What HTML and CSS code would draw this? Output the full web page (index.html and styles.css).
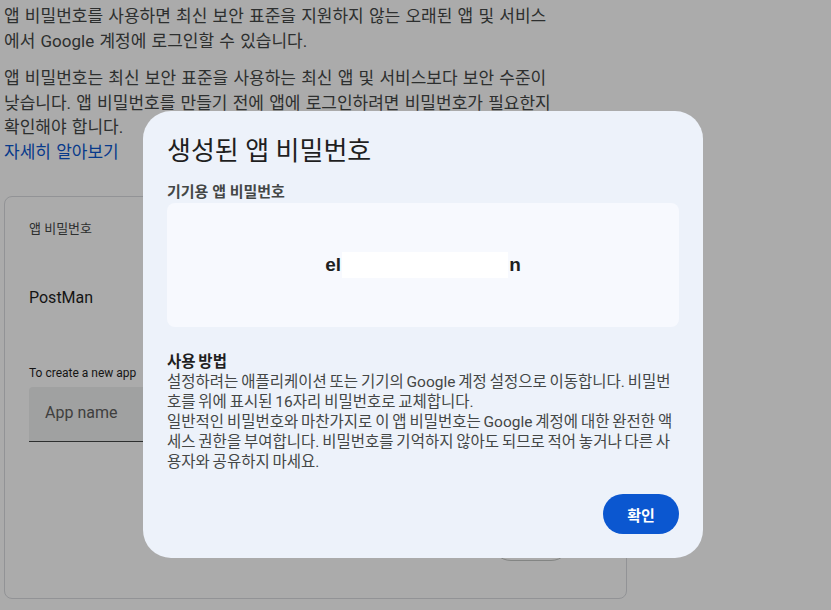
FILE: index.html
```html
<!DOCTYPE html>
<html lang="ko">

<head>
  <meta charset="utf-8">
  <meta name="viewport" content="width=device-width, initial-scale=1">
  <title>앱 비밀번호</title>
  <link rel="stylesheet" href="styles.css">
</head>

<body>
  <div class="page">
    <p class="intro">앱 비밀번호를 사용하면 최신 보안 표준을 지원하지 않는 오래된 앱 및 서비스에서 Google 계정에 로그인할 수 있습니다.</p>
    <p class="intro">앱 비밀번호는 최신 보안 표준을 사용하는 최신 앱 및 서비스보다 보안 수준이 낮습니다. 앱 비밀번호를 만들기 전에 앱에 로그인하려면 비밀번호가 필요한지 확인해야 합니다.<br>
      <a href="#" class="learn-more">자세히 알아보기</a>
    </p>

    <div class="card">
      <div class="card-label">앱 비밀번호</div>
      <div class="app-row">PostMan</div>
      <div class="create-hint">To create a new app</div>
      <div class="field">App name</div>
      <div class="card-actions">
        <button class="outline-button">만들기</button>
      </div>
    </div>
  </div>

  <!-- 모달 -->
  <div class="scrim"></div>
  <div class="dialog">
    <h2 class="dialog-title">생성된 앱 비밀번호</h2>
    <div class="pw-label">기기용 앱 비밀번호</div>
    <div class="pw-box">
      <span class="pw-text">el<span class="pw-hidden"></span>n</span>
    </div>
    <div class="howto">
      <div class="howto-title">사용 방법</div>
      <p>설정하려는 애플리케이션 또는 기기의 Google 계정 설정으로 이동합니다. 비밀번호를 위에 표시된 16자리 비밀번호로 교체합니다.<br>
        일반적인 비밀번호와 마찬가지로 이 앱 비밀번호는 Google 계정에 대한 완전한 액세스 권한을 부여합니다. 비밀번호를 기억하지 않아도 되므로 적어 놓거나 다른 사용자와 공유하지 마세요.</p>
    </div>
    <div class="dialog-actions">
      <button class="confirm-button">확인</button>
    </div>
  </div>
</body>

</html>
```

FILE: styles.css
```css
* {
  margin: 0;
  padding: 0;
  box-sizing: border-box;
}

body {
  font-family: Roboto, 'Noto Sans CJK KR', sans-serif;
  background: #ffffff;
  color: #1f1f1f;
  height: 610px;
  overflow: hidden;
}

.page {
  padding: 4px 0 0 4px;
  width: 627px;
}

.intro {
  width: 556px;
  font-size: 17px;
  line-height: 24.5px;
  word-spacing: 1px;
  color: #444746;
  margin-bottom: 13px;
}

.learn-more {
  color: #0b57d0;
  text-decoration: none;
}

.card {
  margin-top: 32px;
  border: 1px solid #dadce0;
  border-radius: 8px;
  padding: 21px 24px 30px;
  height: 403px;
}

.card-label {
  font-size: 13px;
  color: #444746;
}

.app-row {
  font-size: 16px;
  margin-top: 51px;
}

.create-hint {
  font-size: 12px;
  margin-top: 59px;
}

.field {
  margin-top: 7px;
  width: 420px;
  height: 55px;
  background: #eff0f0;
  border-bottom: 1px solid #444746;
  border-radius: 4px 4px 0 0;
  padding: 16px 16px;
  font-size: 16px;
  color: #5e5e5e;
}

.card-actions {
  display: flex;
  justify-content: flex-end;
  margin-top: 79px;
  padding-right: 31px;
}

.outline-button {
  width: 80px;
  height: 40px;
  border: 1px solid #c4c7c5;
  border-radius: 20px;
  background: transparent;
  font-family: inherit;
  font-size: 14px;
  color: #0b57d0;
}

.scrim {
  position: fixed;
  inset: 0;
  background: rgba(0, 0, 0, 0.33);
}

.dialog {
  position: fixed;
  left: 143px;
  top: 111px;
  width: 560px;
  height: 447px;
  background: #edf2fa;
  border-radius: 28px;
  padding: 24px;
}

.dialog-title {
  font-size: 26px;
  font-weight: 400;
  color: #1f1f1f;
  line-height: 32px;
}

.pw-label {
  margin-top: 15px;
  font-size: 15px;
  font-weight: 700;
  color: #444746;
  line-height: 20px;
}

.pw-box {
  margin-top: 1px;
  height: 124px;
  background: #f7f9fe;
  border-radius: 8px;
  display: flex;
  align-items: center;
  justify-content: center;
}

.pw-text {
  font-family: 'Liberation Sans', Arial, sans-serif;
  font-size: 19px;
  font-weight: 700;
  color: #1f1f1f;
  display: flex;
  align-items: center;
}

.pw-hidden {
  display: inline-block;
  width: 166px;
  height: 26px;
  margin: 0 1px;
  background: #ffffff;
}

.howto {
  margin-top: 25px;
  font-size: 15.5px;
  line-height: 20px;
  word-spacing: -1px;
  color: #444746;
}

.howto-title {
  font-weight: 700;
  color: #1f1f1f;
}

.dialog-actions {
  display: flex;
  justify-content: flex-end;
  margin-top: 22px;
}

.confirm-button {
  width: 76px;
  height: 40px;
  border: none;
  border-radius: 20px;
  background: #0b57d0;
  color: #ffffff;
  font-family: inherit;
  font-size: 15px;
  font-weight: 700;
}
```
